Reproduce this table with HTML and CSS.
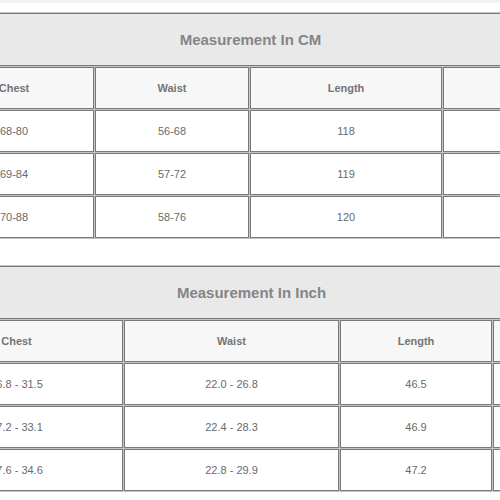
FILE: index.html
```html
<!DOCTYPE html>
<html>
<head>
<meta charset="utf-8">
<link rel="stylesheet" href="styles.css">
</head>
<body>
<div class="topstrip"></div>
<div class="page">
  <table class="size-table cm">
    <tr><td class="title" colspan="4">Measurement In CM</td></tr>
    <tr class="head">
      <th class="c1">Chest</th>
      <th class="c2">Waist</th>
      <th class="c3">Length</th>
      <th class="c4"></th>
    </tr>
    <tr><td>68-80</td><td>56-68</td><td>118</td><td></td></tr>
    <tr><td>69-84</td><td>57-72</td><td>119</td><td></td></tr>
    <tr><td>70-88</td><td>58-76</td><td>120</td><td></td></tr>
  </table>

  <table class="size-table inch">
    <tr><td class="title" colspan="4">Measurement In Inch</td></tr>
    <tr class="head">
      <th class="c1">Chest</th>
      <th class="c2">Waist</th>
      <th class="c3">Length</th>
      <th class="c4"></th>
    </tr>
    <tr><td>26.8 - 31.5</td><td>22.0 - 26.8</td><td>46.5</td><td></td></tr>
    <tr><td>27.2 - 33.1</td><td>22.4 - 28.3</td><td>46.9</td><td></td></tr>
    <tr><td>27.6 - 34.6</td><td>22.8 - 29.9</td><td>47.2</td><td></td></tr>
  </table>
</div>
</body>
</html>
```
FILE: styles.css
```css
html, body {
  margin: 0;
  padding: 0;
  background: #ffffff;
  overflow: hidden;
}
body {
  width: 500px;
  height: 500px;
  font-family: "Liberation Sans", Arial, sans-serif;
}
.topstrip {
  height: 3px;
  background: #f3f3f3;
}
.page {
  padding-top: 9px;
}
.size-table {
  border-collapse: separate;
  border-spacing: 1px;
  background: #c4c4c4;
  table-layout: auto;
}
.size-table td,
.size-table th {
  box-sizing: border-box;
  border: 1px solid #7a7a7a;
  text-align: center;
  padding: 13px 0;
  font-size: 11px;
  line-height: 14px;
  color: #6a6a6a;
  background: #ffffff;
  white-space: nowrap;
}
.size-table th {
  font-weight: bold;
  color: #747474;
  background: #f7f7f7;
}
.size-table td.title {
  background: #e9e9e9;
  font-size: 15px;
  line-height: 17px;
  padding: 17px 0;
  font-weight: bold;
  color: #858585;
}
.cm {
  margin-left: -67px;
  width: 635px;
}
.cm .c1 { width: 160px; }
.cm .c2 { width: 154px; }
.cm .c3 { width: 192px; }
.cm .c4 { width: 124px; }
.inch {
  margin-top: 26px;
  margin-left: -91px;
  width: 685px;
}
.inch .c1 { width: 213px; }
.inch .c2 { width: 215px; }
.inch .c3 { width: 152px; }
.inch .c4 { width: 100px; }
```
